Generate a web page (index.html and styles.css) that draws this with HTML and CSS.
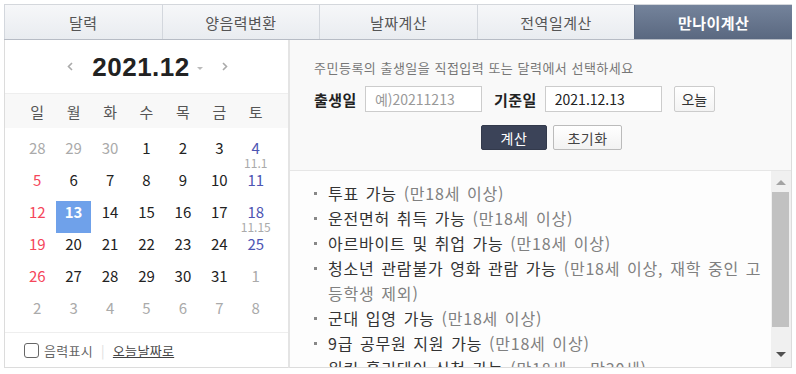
FILE: index.html
```html
<!DOCTYPE html>
<html lang="ko">
<head>
    <meta charset="UTF-8">
    <meta name="viewport" content="width=device-width, initial-scale=1.0">
    <title>만나이계산</title>
    <link rel="stylesheet" href="styles.css">
</head>
<body>

<div class="age-calc">
    <ul class="tabs">
        <li class="tab">달력</li>
        <li class="tab">양음력변환</li>
        <li class="tab">날짜계산</li>
        <li class="tab">전역일계산</li>
        <li class="tab is-active">만나이계산</li>
    </ul>

    <div class="calc-body">
        <div class="calendar">
            <div class="cal-head">
                <button class="cal-nav" type="button">
                    <svg width="6" height="9" viewBox="0 0 6 9"><polyline points="5,1 1.5,4.5 5,8" fill="none" stroke="#aaa" stroke-width="1.6"/></svg>
                </button>
                <strong class="cal-title">2021.12</strong>
                <span class="cal-caret"></span>
                <button class="cal-nav" type="button">
                    <svg width="6" height="9" viewBox="0 0 6 9"><polyline points="1,1 4.5,4.5 1,8" fill="none" stroke="#aaa" stroke-width="1.6"/></svg>
                </button>
            </div>

            <div class="cal-week">
                <span>일</span><span>월</span><span>화</span><span>수</span><span>목</span><span>금</span><span>토</span>
            </div>

            <div class="cal-days">
                <span class="day other">28</span>
                <span class="day other">29</span>
                <span class="day other">30</span>
                <span class="day">1</span>
                <span class="day">2</span>
                <span class="day">3</span>
                <span class="day sat">4<em>11.1</em></span>

                <span class="day sun">5</span>
                <span class="day">6</span>
                <span class="day">7</span>
                <span class="day">8</span>
                <span class="day">9</span>
                <span class="day">10</span>
                <span class="day sat">11</span>

                <span class="day sun">12</span>
                <span class="day today">13</span>
                <span class="day">14</span>
                <span class="day">15</span>
                <span class="day">16</span>
                <span class="day">17</span>
                <span class="day sat">18<em>11.15</em></span>

                <span class="day sun">19</span>
                <span class="day">20</span>
                <span class="day">21</span>
                <span class="day">22</span>
                <span class="day">23</span>
                <span class="day">24</span>
                <span class="day sat">25</span>

                <span class="day sun">26</span>
                <span class="day">27</span>
                <span class="day">28</span>
                <span class="day">29</span>
                <span class="day">30</span>
                <span class="day">31</span>
                <span class="day other">1</span>

                <span class="day other">2</span>
                <span class="day other">3</span>
                <span class="day other">4</span>
                <span class="day other">5</span>
                <span class="day other">6</span>
                <span class="day other">7</span>
                <span class="day other">8</span>
            </div>

            <div class="cal-foot">
                <label class="lunar-label"><input type="checkbox" class="lunar-check"> 음력표시</label>
                <span class="foot-bar">|</span>
                <a class="today-link" href="#">오늘날짜로</a>
            </div>
        </div>

        <div class="age-panel">
            <div class="age-form">
                <p class="guide">주민등록의 출생일을 직접입력 또는 달력에서 선택하세요</p>
                <div class="form-row">
                    <span class="form-label">출생일</span>
                    <input class="date-input" type="text" placeholder="예)20211213">
                    <span class="form-label gap">기준일</span>
                    <input class="date-input" type="text" value="2021.12.13">
                    <button class="btn-today" type="button">오늘</button>
                </div>
                <div class="form-btns">
                    <button class="btn-calc" type="button">계산</button>
                    <button class="btn-reset" type="button">초기화</button>
                </div>
            </div>

            <div class="age-result">
                <ul class="result-list">
                    <li><span>투표 가능 <i>(만18세 이상)</i></span></li>
                    <li><span>운전면허 취득 가능 <i>(만18세 이상)</i></span></li>
                    <li><span>아르바이트 및 취업 가능 <i>(만18세 이상)</i></span></li>
                    <li><span>청소년 관람불가 영화 관람 가능 <i>(만18세 이상, 재학 중인 고등학생 제외)</i></span></li>
                    <li><span>군대 입영 가능 <i>(만18세 이상)</i></span></li>
                    <li><span>9급 공무원 지원 가능 <i>(만18세 이상)</i></span></li>
                    <li><span>워킹 홀리데이 신청 가능 <i>(만18세 ~ 만30세)</i></span></li>
                    <li><span>혼인 가능 <i>(만18세 이상, 부모 동의 필요)</i></span></li>
                </ul>
                <div class="scrollbar">
                    <span class="scroll-up"></span>
                    <span class="scroll-thumb"></span>
                    <span class="scroll-down"></span>
                </div>
            </div>
        </div>
    </div>
</div>

</body>
</html>
```

FILE: styles.css
```css
body {
    margin: 0;
    background-color: #fff;
    font-family: "Noto Sans CJK KR", "Noto Sans", sans-serif;
    color: #333;
}
.age-calc {
    width: 788px;
    margin: 4px 0 0 4px;
}

/* tabs */
.tabs {
    display: flex;
    height: 36px;
    margin: 0;
    padding: 0;
    list-style: none;
    box-sizing: border-box;
    border-top: 1px solid #d4d7dc;
    border-bottom: 1px solid #b7bcc5;
}
.tab {
    flex: 1;
    display: flex;
    align-items: center;
    justify-content: center;
    font-size: 15px;
    letter-spacing: 0.5px;
    color: #555;
    background: linear-gradient(#f6f7f9, #e9ecf0);
    border-left: 1px solid #d3d7dd;
}
.tab.is-active {
    color: #fff;
    font-weight: bold;
    background: linear-gradient(#74839b, #5a6880);
    border-left-color: #5a6880;
}

.calc-body {
    display: flex;
    height: 328px;
}

/* calendar */
.calendar {
    width: 284px;
    box-sizing: border-box;
    border-left: 1px solid #dcdcdc;
    border-bottom: 1px solid #dcdcdc;
    background-color: #fff;
}
.cal-head {
    height: 53px;
    display: flex;
    align-items: center;
    justify-content: center;
    padding-left: 2px;
}
.cal-nav {
    display: flex;
    padding: 0;
    border: none;
    background: none;
    cursor: pointer;
}
.cal-title {
    margin: 0 7px 0 19px;
    font-family: "Liberation Sans", Arial, sans-serif;
    font-size: 26px;
    letter-spacing: 0.5px;
    color: #222;
    line-height: 30px;
}
.cal-caret {
    width: 0;
    height: 0;
    margin: 3px 19px 0 0;
    border-left: 3px solid transparent;
    border-right: 3px solid transparent;
    border-top: 3px solid #bbb;
}
.cal-week,
.cal-days {
    display: grid;
    grid-template-columns: repeat(7, 1fr);
    padding: 0 14px;
}
.cal-week {
    height: 34px;
    align-items: center;
    border-top: 1px solid #eee;
    background-color: #f8f8f8;
    font-size: 15px;
    color: #555;
    text-align: center;
}
.cal-days {
    grid-auto-rows: 32px;
    margin: 9px 0 3px;
}
.day {
    justify-self: center;
    width: 35px;
    padding-top: 2px;
    box-sizing: border-box;
    display: flex;
    flex-direction: column;
    align-items: center;
    font-size: 15px;
    line-height: 18px;
    color: #222;
}
.day em {
    font-style: normal;
    font-size: 12px;
    line-height: 12px;
    color: #aaa;
}
.day.sun { color: #f5465a; }
.day.sat { color: #4d55b3; }
.day.other { color: #aaa; }
.day.today {
    background-color: #6fa1ea;
    color: #fff;
    font-weight: bold;
}
.cal-foot {
    height: 34px;
    display: flex;
    align-items: center;
    border-top: 1px solid #eee;
    padding-left: 19px;
    font-size: 13px;
    letter-spacing: 0.3px;
}
.lunar-label {
    display: flex;
    align-items: center;
    color: #666;
}
.lunar-check {
    appearance: none;
    width: 15px;
    height: 15px;
    margin: 0 5px 0 0;
    border: 1px solid #666;
    border-radius: 3px;
    background-color: #fff;
}
.foot-bar {
    margin: 0 8px;
    color: #ddd;
}
.today-link {
    color: #444;
    text-decoration: underline;
}

/* age panel */
.age-panel {
    width: 504px;
    box-sizing: border-box;
    display: flex;
    flex-direction: column;
    border-left: 2px solid #e4e4e4;
    border-right: 1px solid #dcdcdc;
    border-bottom: 1px solid #dcdcdc;
}
.age-form {
    height: 131px;
    box-sizing: border-box;
    padding: 19px 24px 0;
    border-bottom: 1px solid #e6e6e6;
    background-color: #f9f9f9;
}
.guide {
    margin: 0;
    font-size: 13px;
    letter-spacing: 0.5px;
    line-height: 18px;
    color: #777;
}
.form-row {
    display: flex;
    align-items: center;
    margin-top: 9px;
}
.form-label {
    font-size: 15px;
    font-weight: bold;
    letter-spacing: 0.5px;
    color: #222;
    margin-right: 8px;
}
.form-label.gap {
    margin-left: 12px;
}
.date-input {
    width: 117px;
    height: 26px;
    box-sizing: border-box;
    padding: 0 9px;
    border: 1px solid #ccc;
    background-color: #fff;
    font-family: "Noto Sans CJK KR", sans-serif;
    font-size: 14px;
    color: #222;
    outline: none;
}
.date-input::placeholder {
    color: #999;
}
.btn-today {
    width: 41px;
    height: 26px;
    margin-left: 12px;
    padding: 0;
    border: 1px solid #ccc;
    border-radius: 2px;
    background: linear-gradient(#fff, #f3f3f3);
    font-family: "Noto Sans CJK KR", sans-serif;
    font-size: 14px;
    color: #333;
}
.form-btns {
    display: flex;
    gap: 6px;
    margin-top: 13px;
    padding-left: 167px;
}
.btn-calc,
.btn-reset {
    height: 25px;
    padding: 0;
    border-radius: 2px;
    font-family: "Noto Sans CJK KR", sans-serif;
    font-size: 14px;
    letter-spacing: 0.5px;
}
.btn-calc {
    width: 66px;
    border: 1px solid #333a4c;
    background-color: #3b4358;
    color: #fff;
}
.btn-reset {
    width: 69px;
    border: 1px solid #bbb;
    background: linear-gradient(#fff, #f2f2f2);
    color: #444;
}

.age-result {
    flex: 1;
    display: flex;
    min-height: 0;
    background-color: #fdfdfd;
}
.result-list {
    flex: 1;
    margin: 0;
    padding: 10px 3px 0 24px;
    list-style: none;
    overflow: hidden;
}
.result-list li {
    display: flex;
    font-size: 16px;
    letter-spacing: 0.8px;
    word-spacing: 1.5px;
    line-height: 25px;
    color: #333;
}
.result-list li::before {
    content: "";
    flex: none;
    width: 3px;
    height: 3px;
    margin: 11px 11px 0 0;
    background-color: #888;
}
.result-list i {
    font-style: normal;
    color: #808080;
}
.scrollbar {
    width: 20px;
    display: flex;
    flex-direction: column;
    align-items: center;
    background-color: #f0f0f0;
}
.scroll-up,
.scroll-down {
    width: 0;
    height: 0;
    border-left: 5px solid transparent;
    border-right: 5px solid transparent;
}
.scroll-up {
    margin: 9px 0 7px;
    border-bottom: 5px solid #a3a3a3;
}
.scroll-thumb {
    width: 17px;
    height: 135px;
    margin-left: -1px;
    background-color: #c1c1c1;
}
.scroll-down {
    margin-top: 25px;
    border-top: 5px solid #505050;
}
```
